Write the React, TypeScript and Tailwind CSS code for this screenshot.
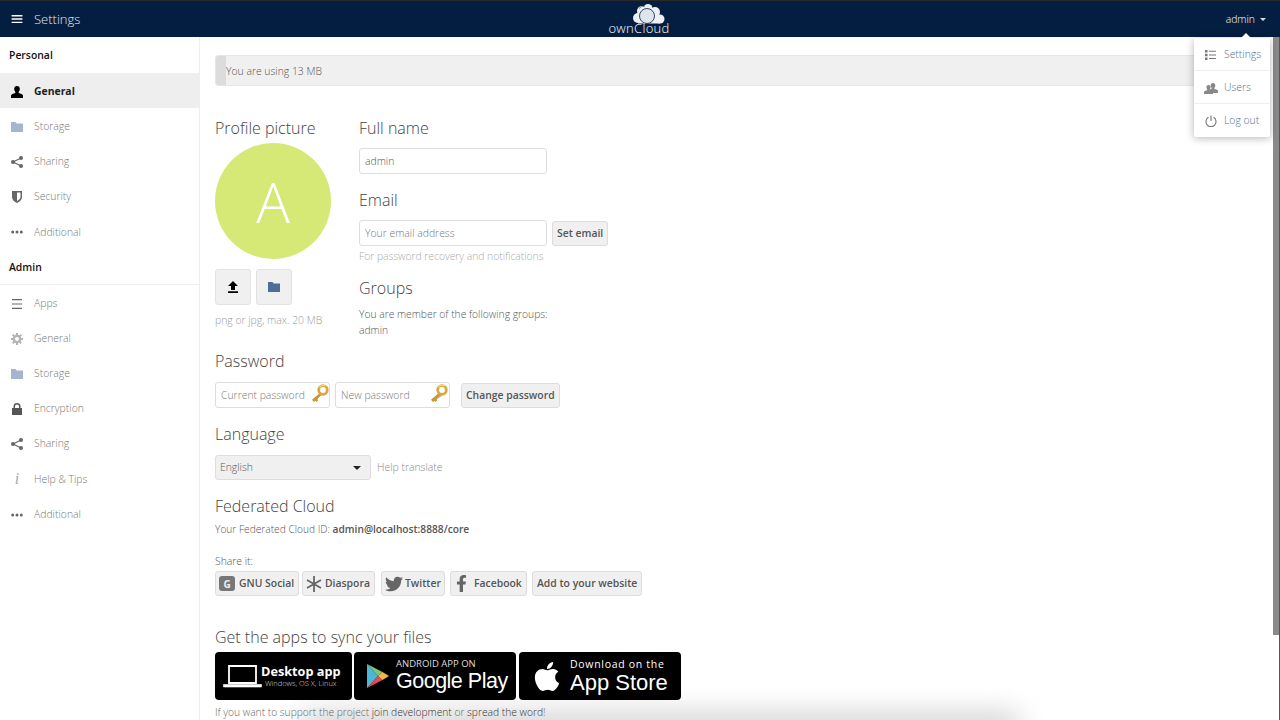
import { FaApple, FaFacebookF, FaTwitter } from 'react-icons/fa'

const sans = "font-['Open_Sans',sans-serif]"

function Folder({ className }: { className: string }) {
  return (
    <svg viewBox="0 0 12 10" className={className} fill="currentColor">
      <path d="M0 0h4.500l1.200 1.400H12V10H0z" />
    </svg>
  )
}

function Share() {
  return (
    <svg viewBox="0 0 12 12" className="h-3 w-3 text-[#666]" fill="currentColor">
      <circle cx="2" cy="6" r="2" />
      <circle cx="10" cy="2" r="2" />
      <circle cx="10" cy="10" r="2" />
      <path d="M2 6l8-4M2 6l8 4" stroke="currentColor" strokeWidth="1.200" />
    </svg>
  )
}

function Dots() {
  return (
    <svg viewBox="0 0 12 4" className="h-1 w-3 text-[#666]" fill="currentColor">
      <circle cx="1.700" cy="2" r="1.500" />
      <circle cx="6" cy="2" r="1.500" />
      <circle cx="10.300" cy="2" r="1.500" />
    </svg>
  )
}

function Person({ className }: { className: string }) {
  return (
    <svg viewBox="0 0 12 12" className={className} fill="currentColor">
      <path d="M6 0c1.800 0 2.800 1.300 2.800 3 0 1.300-.6 2.400-1.300 3 0 .8.500 1.100 1.500 1.400 1.500.4 2.600.9 2.900 1.900.2.700.1 1.700.1 2.700H0c0-1 0-2 .1-2.700.3-1 1.400-1.500 2.900-1.900 1-.3 1.500-.6 1.500-1.400C3.800 5.400 3.200 4.300 3.200 3 3.200 1.300 4.200 0 6 0z" />
    </svg>
  )
}

function Shield() {
  return (
    <svg viewBox="0 0 12 12" className="h-3 w-3 text-[#666]" fill="currentColor">
      <path fillRule="evenodd" d="M1 0h10v6c0 3-2.500 5-5 6-2.500-1-5-3-5-6zm5 1.500V10c1.700-.8 3.500-2.200 3.500-4V1.500z" />
    </svg>
  )
}

function Bars() {
  return (
    <svg viewBox="0 0 12 12" className="h-3 w-3 text-[#666]" fill="currentColor">
      <path d="M1 1h10v1.200H1zM1 5.400h10v1.200H1zM1 9.800h10V11H1z" />
    </svg>
  )
}

function Gear() {
  return (
    <svg viewBox="0 0 14 14" className="h-[14px] w-[14px] text-[#b4b4b4]" fill="none" stroke="currentColor">
      <circle cx="7" cy="7" r="3.700" strokeWidth="2.800" />
      <path d="M7 0v2.500M7 11.500V14M0 7h2.500M11.500 7H14M2 2l1.800 1.800M10.200 10.200L12 12M12 2l-1.800 1.800M3.800 10.200L2 12" strokeWidth="2.400" />
    </svg>
  )
}

function Lock() {
  return (
    <svg viewBox="0 0 12 12" className="h-3 w-3 text-[#555]" fill="currentColor">
      <path fillRule="evenodd" d="M2.500 5V3.500a3.500 3.500 0 017 0V5H11v7H1V5zm1.500 0h4V3.500a2 2 0 00-4 0z" />
    </svg>
  )
}

function Info() {
  return <span className="w-3 text-center font-['Liberation_Serif',serif] text-[16px] italic leading-none text-[#aaa]">i</span>
}

function Key({ shadow }: { shadow?: boolean }) {
  return (
    <svg viewBox="0 0 18 20" className="h-5 w-[18px]">
      {shadow && <path d="M10 9L2 15l1 3 9-6z" fill="#bbb" />}
      <path d="M9.500 8.500L1 15.800l2 2.200 1.400-1.300 1.200 1.200 1.600-1.600-.9-1.200 4.900-4.700z" fill="#c9962f" />
      <circle cx="12" cy="6" r="4.300" fill="none" stroke="#d8a93f" strokeWidth="2.800" />
      <path d="M8.500 3.500a4.500 4.500 0 016-1.500" fill="none" stroke="#f3dc8c" strokeWidth="1.200" />
    </svg>
  )
}

function NavItem({ icon, label, active }: { icon: React.ReactNode; label: string; active?: boolean }) {
  return (
    <div className={`flex h-[35.2px] items-center gap-[11px] pl-[11px] pt-[2px] text-[10.400px] ${active ? 'bg-[#eee] font-bold text-[#222]' : 'font-light text-[#777]'}`}>
      <span className="flex w-3 justify-center">{icon}</span>
      <span>{label}</span>
    </div>
  )
}

function Heading({ children, className = '' }: { children: React.ReactNode; className?: string }) {
  return <h2 className={`text-base font-light leading-[22px] text-[#444] ${className}`}>{children}</h2>
}

function TextBox({ value, placeholder, className }: { value?: string; placeholder?: boolean; className: string }) {
  return (
    <div className={`flex h-[26px] items-center rounded-[3px] border border-[#ddd] bg-white pl-[5px] text-[10.400px] font-light ${placeholder ? 'text-[#777]' : 'text-[#555]'} ${className}`}>
      {value}
    </div>
  )
}

function GrayButton({ children, className = '' }: { children: React.ReactNode; className?: string }) {
  return (
    <div className={`flex h-[25px] items-center rounded-[3px] border border-[#ddd] bg-[#f0f0f0] text-[10.400px] font-semibold text-[#555] ${className}`}>
      {children}
    </div>
  )
}

export default function App() {
  return (
    <div className={`relative flex h-[720px] w-[1280px] flex-col overflow-hidden bg-white ${sans}`}>
      <div className="absolute bottom-[-12px] left-[300px] h-[16px] w-[720px] rounded-full bg-[#bbb] blur-[14px]" />

      <header className="relative flex h-[37px] shrink-0 items-center justify-between border-t border-[#2a2a2a] bg-[#041e42] pl-[11px] pr-[14px] text-white">
        <div className="flex items-center gap-[11px]">
          <svg viewBox="0 0 12 10" className="h-[9px] w-3" fill="currentColor">
            <path d="M0 0h12v1.600H0zM0 3.700h12v1.600H0zM0 7.400h12V9H0z" />
          </svg>
          <span className="pt-px text-[13px] font-light text-[#e4e8ee]">Settings</span>
        </div>
        <div className="absolute left-[609px] top-[3px] flex w-[60px] flex-col items-center">
          <svg viewBox="0 0 40 20" className="ml-[16px] h-[20px] w-[40px]">
            <g fill="#eef1f4">
              <circle cx="11" cy="14" r="5" />
              <circle cx="15" cy="7" r="5" />
              <circle cx="21" cy="4.500" r="4.500" />
              <circle cx="28" cy="8" r="5" />
              <circle cx="33" cy="15" r="4.500" />
              <rect x="11" y="12" width="22" height="7.500" />
            </g>
            <circle cx="20" cy="12" r="7.500" fill="#dfe5ec" stroke="#041e42" strokeWidth=".8" />
            <path d="M12 4.500a6 6 0 016-2.500" fill="none" stroke="#041e42" strokeWidth=".6" />
          </svg>
          <span className="-mt-[2px] text-[13px] font-light leading-[13px] tracking-[.3px] text-white">ownCloud</span>
        </div>
        <div className="flex items-center gap-[5px] pt-px text-[10.400px] font-light text-white">
          admin
          <span className="mt-[1px] h-0 w-0 border-x-[3px] border-t-[3px] border-x-transparent border-t-[#ddd]" />
        </div>
      </header>

      <div className="relative flex min-h-0 flex-1">
        <aside className="w-[200px] shrink-0 border-r border-[#eee]">
          <div className="flex h-[36px] items-center pl-[9px] pt-[2px] text-[10.400px] font-semibold text-[#111]">Personal</div>
          <NavItem active label="General" icon={<Person className="h-3 w-3 text-black" />} />
          <NavItem label="Storage" icon={<Folder className="h-[10px] w-3 text-[#a5b5cf]" />} />
          <NavItem label="Sharing" icon={<Share />} />
          <NavItem label="Security" icon={<Shield />} />
          <NavItem label="Additional" icon={<Dots />} />
          <div className="flex h-[36px] items-center border-b border-[#eee] pl-[9px] pt-[2px] text-[10.400px] font-semibold text-[#111]">Admin</div>
          <NavItem label="Apps" icon={<Bars />} />
          <NavItem label="General" icon={<Gear />} />
          <NavItem label="Storage" icon={<Folder className="h-[10px] w-3 text-[#a5b5cf]" />} />
          <NavItem label="Encryption" icon={<Lock />} />
          <NavItem label="Sharing" icon={<Share />} />
          <NavItem label="Help & Tips" icon={<Info />} />
          <NavItem label="Additional" icon={<Dots />} />
        </aside>

        <main className="min-w-0 flex-1 pl-[15px] pr-[15px] pt-[18px]">
          <div className="flex h-[31px] items-center overflow-hidden rounded-[3px] border border-[#e6e6e6] bg-[#f0f0f0] text-[10.400px] font-light text-[#555]">
            <div className="h-full w-[10px] bg-[#dcdcdc]" />
            <span className="pt-[2px]">You are using 13 MB</span>
          </div>

          <div className="mt-[31px] flex">
            <div className="w-[144px]">
              <Heading>Profile picture</Heading>
              <div className="mt-[4px] flex h-[116px] w-[116px] items-center justify-center rounded-full bg-[#d6e876] text-[56px] font-light leading-none text-white">A</div>
              <div className="mt-[10px] flex gap-[5px]">
                <div className="flex h-[36px] w-[36px] items-center justify-center rounded-[3px] border border-[#e2e2e2] bg-[#f0f0f0]">
                  <svg viewBox="0 0 12 12" className="h-3 w-3 text-black" fill="currentColor">
                    <path d="M6 0l5 5H8v4H4V5H1zM1 10.300h10V12H1z" />
                  </svg>
                </div>
                <div className="flex h-[36px] w-[36px] items-center justify-center rounded-[3px] border border-[#e2e2e2] bg-[#f0f0f0]">
                  <Folder className="h-[10px] w-3 text-[#4f6d9c]" />
                </div>
              </div>
              <p className="mt-[8px] text-[10.400px] font-light leading-[15px] text-[#999]">png or jpg, max. 20 MB</p>
            </div>
            <div>
              <Heading>Full name</Heading>
              <TextBox value="admin" className="mt-[9px] w-[188px] pt-[2px]" />
              <Heading className="mt-[15px]">Email</Heading>
              <div className="mt-[9px] flex items-center gap-[5px]">
                <TextBox value="Your email address" placeholder className="w-[188px] pt-[2px]" />
                <GrayButton className="mt-[1px] px-[4px] pt-px">Set email</GrayButton>
              </div>
              <p className="mt-[3px] text-[10.300px] font-light leading-[15px] text-[#aaa]">For password recovery and notifications</p>
              <Heading className="mt-[13px]">Groups</Heading>
              <p className="mt-[7px] text-[10.300px] font-light leading-[16px] text-[#555]">You are member of the following groups:<br />admin</p>
            </div>
          </div>

          <Heading className="mt-[12px]">Password</Heading>
          <div className="mt-[10px] flex items-center">
            <div className="relative">
              <TextBox value="Current password" placeholder className="w-[115px] pt-px" />
              <div className="absolute right-[1px] top-[2px]"><Key /></div>
            </div>
            <div className="relative ml-[5px]">
              <TextBox value="New password" placeholder className="w-[115px] pt-px" />
              <div className="absolute right-[2px] top-[2px]"><Key shadow /></div>
            </div>
            <GrayButton className="ml-[11px] px-[4px] pt-px">Change password</GrayButton>
          </div>

          <Heading className="mt-[15px]">Language</Heading>
          <div className="mt-[10px] flex items-center gap-[6px]">
            <div className="flex h-[25px] w-[156px] items-center justify-between rounded-[3px] border border-[#ddd] bg-[#f0f0f0] pl-[4px] pr-[9px] text-[10.400px] font-light text-[#555]">
              English
              <span className="h-0 w-0 border-x-[4px] border-t-[4px] border-x-transparent border-t-[#222]" />
            </div>
            <span className="text-[10.400px] font-light text-[#888]">Help translate</span>
          </div>

          <Heading className="mt-[15px]">Federated Cloud</Heading>
          <p className="mt-[4px] text-[10.200px] leading-[16px] text-[#555]">
            <span className="font-light">Your Federated Cloud ID: </span>
            <span className="font-semibold">admin@localhost:8888/core</span>
          </p>
          <p className="mt-[16px] text-[10.400px] font-light leading-[16px] text-[#555]">Share it:</p>
          <div className="mt-[2px] flex items-center text-[#666]">
            <GrayButton className="w-[84px] gap-[4px] pl-[3px]">
              <span className="relative flex h-[15px] w-[16px] items-center justify-center rounded-[3px] bg-[#777] text-[10px] font-bold leading-none text-[#eee]">G</span>
              GNU Social
            </GrayButton>
            <GrayButton className="ml-[3px] w-[73px] gap-[3px] pl-[3px]">
              <svg viewBox="0 0 16 16" className="h-4 w-4 text-[#666]" fill="none" stroke="currentColor" strokeWidth="1.800">
                <path d="M8 0v16M1 4l14 8M15 4L1 12" />
              </svg>
              Diaspora
            </GrayButton>
            <GrayButton className="ml-[6px] w-[64px] gap-[2px] pl-[3px]">
              <FaTwitter className="h-[18px] w-[18px] text-[#666]" />
              Twitter
            </GrayButton>
            <GrayButton className="ml-[5px] w-[77px] gap-[7px] pl-[5px]">
              <FaFacebookF className="h-[17px] w-[11px] text-[#666]" />
              Facebook
            </GrayButton>
            <GrayButton className="ml-[5px] px-[4px]">Add to your website</GrayButton>
          </div>

          <h2 className="mt-[30px] text-base font-light leading-[22px] text-[#444]">Get the apps to sync your files</h2>
          <div className="mt-[4px] flex text-white">
            <div className="flex h-[48px] w-[137px] items-center rounded-[4px] bg-black pl-[8px]">
              <svg viewBox="0 0 39 23" className="h-[23px] w-[39px]" fill="none" stroke="white">
                <path d="M6 1h27v17H6z" strokeWidth="1.800" />
                <path d="M.5 19.500h38V22H.5z" fill="white" strokeWidth=".6" />
              </svg>
              <div className="-ml-[1px] flex flex-col items-center">
                <span className="text-[12.700px] font-bold leading-[15px]">Desktop app</span>
                <span className="text-[7.500px] font-light leading-[9px] text-[#ddd]">Windows, OS X, Linux</span>
              </div>
            </div>
            <div className="ml-[2px] flex h-[48px] w-[162px] items-center rounded-[4px] bg-black pl-[13px]">
              <svg viewBox="0 0 22 24" className="h-[24px] w-[22px]">
                <path d="M0 0v24l11-12z" fill="#4cb8d8" />
                <path d="M0 0l11 12 4.500-4z" fill="#7ac77a" />
                <path d="M0 24l11-12 4.500 4z" fill="#e2495a" />
                <path d="M15.500 8l6.500 4-6.500 4L11 12z" fill="#f3b44d" />
              </svg>
              <div className="ml-[7px] flex flex-col">
                <span className="text-[9.500px] leading-[11px] text-[#ddd]">ANDROID APP ON</span>
                <span className="font-['Liberation_Sans',sans-serif] text-[21.500px] leading-[25px] tracking-[-.5px]">Google Play</span>
              </div>
            </div>
            <div className="ml-[3px] flex h-[48px] w-[162px] items-center rounded-[4px] bg-black pl-[14px]">
              <FaApple className="h-[33px] w-[28px]" />
              <div className="ml-[9px] flex flex-col pt-px">
                <span className="text-[10.500px] leading-[12px] tracking-[.7px]">Download on the</span>
                <span className="font-['Liberation_Sans',sans-serif] text-[22px] leading-[26px]">App Store</span>
              </div>
            </div>
          </div>
          <p className="mt-[4px] text-[10.250px] font-light leading-[16px] text-[#666]">
            If you want to support the project <span className="text-[#333]">join development</span> or <span className="text-[#333]">spread the word</span>!
          </p>
        </main>
      </div>

      {/* scrollbar and user menu sit over the content */}
      <div className="absolute right-[1px] top-[37px] h-[598px] w-[6px] bg-[#8a8a8a]" />
      <div className="absolute bottom-0 right-0 top-[37px] w-px bg-[#5b5055]" />
      <div className="absolute left-[1194px] top-[38px] w-[76px] rounded-[2px] bg-white text-[10.400px] font-light text-[#4c7393] shadow-[0_1px_8px_rgba(0,0,0,.3)]">
        <div className="absolute -top-[5px] right-[18px] h-0 w-0 border-x-[6px] border-b-[6px] border-x-transparent border-b-white" />
        <div className="flex h-[33px] items-center gap-[8px] border-b border-[#eee] pl-[11px] pt-px">
          <svg viewBox="0 0 11 10" className="h-[10px] w-[11px] text-[#777]" fill="currentColor">
            <path d="M0 0h2.500v2.500H0zM0 3.700h2.500v2.500H0zM0 7.400h2.500V10H0zM4 .7h7v1H4zM4 4.400h7v1H4zM4 8.100h7v1H4z" />
          </svg>
          Settings
        </div>
        <div className="flex h-[33px] items-center gap-[6px] border-b border-[#eee] pl-[10px] pt-px">
          <span className="relative h-3 w-[14px]">
            <Person className="absolute left-0 top-[3px] h-[9px] w-[9px] text-[#888]" />
            <Person className="absolute right-0 top-0 h-[12px] w-[10px] text-[#888]" />
          </span>
          Users
        </div>
        <div className="flex h-[33px] items-center gap-[7px] pl-[11px]">
          <svg viewBox="0 0 12 12" className="h-3 w-3 text-[#777]" fill="none" stroke="currentColor" strokeWidth="1.100">
            <path d="M3.500 2.300a5 5 0 105 0M6 .5v5.500" />
          </svg>
          Log out
        </div>
      </div>
    </div>
  )
}
